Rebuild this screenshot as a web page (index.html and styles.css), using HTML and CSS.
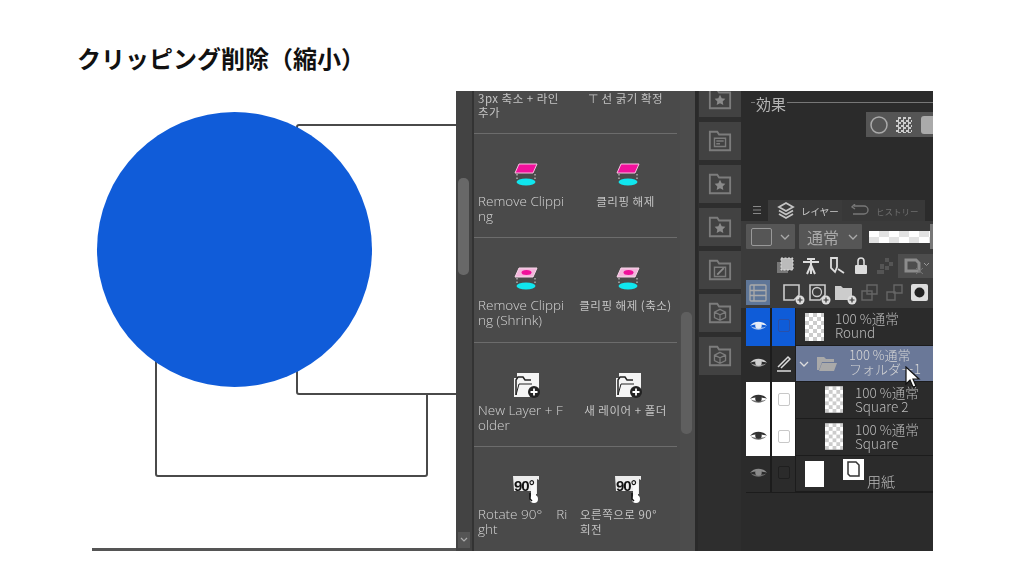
FILE: index.html
```html
<!DOCTYPE html>
<html lang="ja">
<head>
<meta charset="utf-8">
<title>クリッピング削除（縮小）</title>
<link rel="stylesheet" href="styles.css">
</head>
<body>
<svg class="defs" width="0" height="0" aria-hidden="true">
  <defs>
    <pattern id="chk" width="8" height="8" patternUnits="userSpaceOnUse">
      <rect width="8" height="8" fill="#fff"/><rect width="4" height="4" fill="#ccc"/><rect x="4" y="4" width="4" height="4" fill="#ccc"/>
    </pattern>
    <symbol id="clip" viewBox="0 0 30 30">
      <path d="M8 3H26L22 12H4Z" fill="#f2109c" stroke="#f7c4e2"/>
      <path d="M6 13v5M24 13v5" stroke="#ddd" stroke-dasharray="1.5 2"/>
      <ellipse cx="15" cy="21" rx="9.500" ry="3.500" fill="#10e6ee"/>
    </symbol>
    <symbol id="clips" viewBox="0 0 30 30">
      <path d="M8 3H26L22 12H4Z" fill="#f4b5dc" stroke="#f8d8ea"/>
      <ellipse cx="15.500" cy="7.500" rx="5" ry="2.500" fill="#f0109a"/>
      <path d="M6 13v5M24 13v5" stroke="#ddd" stroke-dasharray="1.5 2"/>
      <ellipse cx="15" cy="21" rx="9.500" ry="3.500" fill="#10e6ee"/>
    </symbol>
    <symbol id="newfolder" viewBox="0 0 30 30">
      <path d="M3 27V8h3V3h22v17l-4 7z" fill="#f4f4f4"/>
      <path d="M5 25V10l2-3h5l2 3h6" fill="none" stroke="#222" stroke-width="1.500"/>
      <path d="M5 25l3-11h13" fill="none" stroke="#222" stroke-width="1"/>
      <circle cx="23" cy="22" r="6" fill="#222"/>
      <path d="M23 18.500v7M19.500 22h7" stroke="#fff" stroke-width="1.800"/>
    </symbol>
    <symbol id="rotate" viewBox="0 0 30 30">
      <path d="M2 2H28V6L26 5V20H20V17H3Z" fill="#ececec"/>
      <path d="M20 10h5v14h-5z" fill="#f8f8f8"/>
      <circle cx="23" cy="25" r="4" fill="#fff"/>
      <path d="M19 19v6l2 2" fill="none" stroke="#111" stroke-width="1.500"/>
      <text x="3" y="17" class="rot">90°</text>
    </symbol>
    <symbol id="starfolder" viewBox="0 0 26 26">
      <path d="M2 3h8l2 3h12v17H2z" fill="none" stroke="#7c7c7c" stroke-width="2"/>
      <path d="M13 8.500l1.800 3.700 4 .6-2.900 2.800.7 4-3.600-1.900-3.600 1.900.7-4-2.900-2.800 4-.6z" fill="#8a8a8a"/>
    </symbol>
    <symbol id="formfolder" viewBox="0 0 26 26">
      <path d="M2 3h8l2 3h12v17H2z" fill="none" stroke="#7c7c7c" stroke-width="2"/>
      <path d="M7 10h12v9H7zM9 13h8M9 16h4" fill="none" stroke="#7c7c7c" stroke-width="1.500"/>
    </symbol>
    <symbol id="editfolder" viewBox="0 0 26 26">
      <path d="M2 3h8l2 3h12v17H2z" fill="none" stroke="#7c7c7c" stroke-width="2"/>
      <path d="M7 10h12v10H7z" fill="none" stroke="#7c7c7c" stroke-width="1.500"/>
      <path d="M10 18l7-7" stroke="#8a8a8a" stroke-width="2"/>
    </symbol>
    <symbol id="boxfolder" viewBox="0 0 26 26">
      <path d="M2 3h8l2 3h12v17H2z" fill="none" stroke="#7c7c7c" stroke-width="2"/>
      <path d="M13 9l6 3v6l-6 3-6-3v-6zM7 12l6 3 6-3M13 15v6" fill="none" stroke="#7c7c7c" stroke-width="1.400"/>
    </symbol>
    <symbol id="eye" viewBox="0 0 20 14">
      <path d="M1 7C5 1 15 1 19 7C15 5 5 5 1 7Z" fill="currentColor"/>
      <path d="M2 7.500C6 12 14 12 18 7.500C14 9.500 6 9.500 2 7.500Z" fill="currentColor" opacity=".7"/>
      <circle cx="10" cy="6.500" r="3.400" fill="currentColor"/>
    </symbol>
    <symbol id="addbadge" viewBox="0 0 10 10">
      <circle cx="5" cy="5" r="4.500" fill="#ddd"/>
      <path d="M5 2.500v5M2.500 5h5" stroke="#333" stroke-width="1.200"/>
    </symbol>
  </defs>
</svg>

<h1 class="title">クリッピング削除（縮小）</h1>

<main class="stage">
  <section class="drawing">
    <div class="shape shape-back"></div>
    <div class="shape shape-front"></div>
    <div class="shape shape-circle"></div>
  </section>

  <section class="app">
    <div class="side-scroll">
      <div class="thumb-left"></div>
      <svg class="chev" width="12" height="16" viewBox="0 0 12 16"><path d="M3 6l3 3 3-3" fill="none" stroke="#aaa" stroke-width="1.200"/></svg>
    </div>

    <div class="palette">
      <div class="p-row p-row-top">
        <div class="p-cell"><p class="label kr">3px 축소 + 라인<br>추가</p></div>
        <div class="p-cell"><p class="label kr center">⊤ 선 굵기 확정</p></div>
      </div>
      <div class="p-row">
        <div class="p-cell"><svg class="p-icon"><use href="#clip"/></svg><p class="label">Remove Clippi<br>ng</p></div>
        <div class="p-cell"><svg class="p-icon"><use href="#clip"/></svg><p class="label kr center">클리핑 해제</p></div>
      </div>
      <div class="p-row">
        <div class="p-cell"><svg class="p-icon"><use href="#clips"/></svg><p class="label">Remove Clippi<br>ng (Shrink)</p></div>
        <div class="p-cell"><svg class="p-icon"><use href="#clips"/></svg><p class="label kr center">클리핑 해제 (축소)</p></div>
      </div>
      <div class="p-row">
        <div class="p-cell"><svg class="p-icon"><use href="#newfolder"/></svg><p class="label">New Layer + F<br>older</p></div>
        <div class="p-cell"><svg class="p-icon"><use href="#newfolder"/></svg><p class="label kr center">새 레이어 + 폴더</p></div>
      </div>
      <div class="p-row p-row-last">
        <div class="p-cell"><svg class="p-icon"><use href="#rotate"/></svg><p class="label">Rotate 90°&nbsp;&nbsp;&nbsp;&nbsp;Ri<br>ght</p></div>
        <div class="p-cell"><svg class="p-icon"><use href="#rotate"/></svg><p class="label kr">오른쪽으로 90°<br>회전</p></div>
      </div>
    </div>

    <div class="palette-scroll"><div class="thumb-right"></div></div>

    <nav class="tabs-strip">
      <div class="t-btn t-btn-first"><svg class="t-icon"><use href="#starfolder"/></svg></div>
      <div class="t-btn"><svg class="t-icon"><use href="#formfolder"/></svg></div>
      <div class="t-btn"><svg class="t-icon"><use href="#starfolder"/></svg></div>
      <div class="t-btn"><svg class="t-icon"><use href="#starfolder"/></svg></div>
      <div class="t-btn"><svg class="t-icon"><use href="#editfolder"/></svg></div>
      <div class="t-btn"><svg class="t-icon"><use href="#boxfolder"/></svg></div>
      <div class="t-btn"><svg class="t-icon"><use href="#boxfolder"/></svg></div>
    </nav>

    <div class="panel">
      <div class="fx">
        <div class="legend"><i class="rule rule-short"></i><span>効果</span><i class="rule"></i></div>
        <div class="fx-tools">
          <svg width="20" height="20" viewBox="0 0 20 20"><circle cx="10" cy="10" r="8" fill="none" stroke="#aaa" stroke-width="1.500"/></svg>
          <i class="dots"></i>
          <i class="fx-square"></i>
        </div>
      </div>

      <div class="tabbar">
        <svg class="menu" width="10" height="10" viewBox="0 0 10 10"><path d="M1 1.500h8M1 5h8M1 8.500h8" stroke="#888" stroke-width="1"/></svg>
        <div class="tab tab-on">
          <svg width="18" height="20" viewBox="0 0 18 20"><path d="M9 2l7 4-7 4-7-4zM2 9.500l7 4 7-4M2 13l7 4 7-4" fill="none" stroke="#c4c4c4" stroke-width="1.800"/></svg>
          <span>レイヤー</span>
        </div>
        <div class="tab tab-off">
          <svg width="20" height="14" viewBox="0 0 20 14"><path d="M4 2h10a4 4 0 0 1 0 8H3M5 0L2 3l3 2" fill="none" stroke="#777" stroke-width="1.400"/></svg>
          <span>ヒストリー</span>
        </div>
      </div>

      <div class="controls">
        <div class="select select-color">
          <i class="swatch"></i>
          <svg width="10" height="6" viewBox="0 0 10 6"><path d="M1 1l4 4 4-4" fill="none" stroke="#aaa" stroke-width="1.300"/></svg>
        </div>
        <div class="select select-mode">
          <span>通常</span>
          <svg width="10" height="6" viewBox="0 0 10 6"><path d="M1 1l4 4 4-4" fill="none" stroke="#aaa" stroke-width="1.300"/></svg>
        </div>
        <div class="opacity"></div>
        <i class="handle"></i>
      </div>

      <div class="toolrow">
        <svg width="18" height="18" viewBox="0 0 18 18"><rect x="1" y="5" width="11" height="11" fill="#777"/><rect x="5" y="1" width="12" height="12" fill="#bbb" stroke="#ddd" stroke-dasharray="2 1.500"/></svg>
        <svg width="18" height="18" viewBox="0 0 18 18"><path d="M1 5h16M5 2h8M9 2v15M5 17l4-9 4 9" fill="none" stroke="#ddd" stroke-width="2"/></svg>
        <svg width="18" height="20" viewBox="0 0 18 20"><path d="M3 2h6v9l-2 5-4-4zM10 13l6 4" fill="none" stroke="#ddd" stroke-width="1.800"/></svg>
        <svg width="14" height="18" viewBox="0 0 14 18"><rect x="1" y="8" width="12" height="9" rx="1" fill="#ddd"/><path d="M4 8V4a3 3 0 0 1 6 0v4" fill="none" stroke="#ddd" stroke-width="1.600"/></svg>
        <svg width="18" height="18" viewBox="0 0 18 18"><path d="M9 1h4v4H9zM13 5h4v4h-4zM9 9h4v4H9zM1 13h7v4H1zM4 7h4v5H4z" fill="#555"/></svg>
        <div class="clip-btn">
          <svg width="26" height="18" viewBox="0 0 26 18"><path d="M3 3h10l3 3v8H3z" fill="none" stroke="#8c8c8c" stroke-width="3"/><path d="M13 11l7 6M20 11l-7 6" stroke="#777"/><path d="M21 6l2.500 2.500L26 6" fill="none" stroke="#999"/></svg>
        </div>
      </div>

      <div class="toolrow toolrow-layer">
        <div class="layer-toggle">
          <svg width="18" height="18" viewBox="0 0 18 18"><rect x="1" y="1" width="16" height="16" rx="1" fill="none" stroke="#aaa" stroke-width="1.300"/><path d="M1 6.500h16M1 11.500h16M5 1v16" stroke="#aaa" stroke-width="1.300"/></svg>
        </div>
        <div class="add-icons">
          <span class="add"><svg width="19" height="19" viewBox="0 0 19 19"><path d="M2 2h15v10l-5 5H2z" fill="none" stroke="#ccc" stroke-width="1.600"/></svg><svg class="badge"><use href="#addbadge"/></svg></span>
          <span class="add"><svg width="19" height="19" viewBox="0 0 19 19"><path d="M2 2h15v10l-5 5H2z" fill="none" stroke="#ccc" stroke-width="1.600"/><circle cx="9" cy="9" r="4.500" fill="none" stroke="#ccc" stroke-width="1.300"/></svg><svg class="badge"><use href="#addbadge"/></svg></span>
          <span class="add"><svg width="19" height="19" viewBox="0 0 19 19"><path d="M1 3h6l2 2h9v12H1z" fill="#ccc"/></svg><svg class="badge"><use href="#addbadge"/></svg></span>
          <svg width="19" height="19" viewBox="0 0 19 19"><path d="M7 2h10v9H7zM2 8h10v9H2z" fill="none" stroke="#666" stroke-width="1.400"/></svg>
          <svg width="19" height="19" viewBox="0 0 19 19"><path d="M9 2h8v8H9zM2 9h8v8H2z" fill="none" stroke="#666" stroke-width="1.400"/></svg>
          <svg width="19" height="19" viewBox="0 0 19 19"><rect x="1" y="1" width="17" height="17" rx="2" fill="#ddd"/><circle cx="9.500" cy="9.500" r="5" fill="#222"/></svg>
        </div>
      </div>

      <div class="layers">
        <div class="layer layer-round">
          <div class="l-cell l-blue"><svg class="l-eye"><use href="#eye"/></svg></div>
          <div class="l-cell l-blue"><i class="check check-blue"></i></div>
          <div class="l-body l-body-round">
            <svg class="thumb" viewBox="0 0 19 28"><rect width="19" height="28" fill="url(#chk)"/></svg>
            <p class="l-text"><span>100 %通常</span><span>Round</span></p>
          </div>
        </div>
        <div class="layer layer-folder">
          <div class="l-cell"><svg class="l-eye"><use href="#eye"/></svg></div>
          <div class="l-cell"><svg width="16" height="18" viewBox="0 0 16 18"><path d="M2 13L12 3l2 2L5 14M1 17h14" fill="none" stroke="#ddd" stroke-width="1.500"/></svg></div>
          <div class="l-body l-body-folder">
            <svg width="10" height="6" viewBox="0 0 10 6"><path d="M1 1l4 4 4-4" fill="none" stroke="#ddd" stroke-width="1.300"/></svg>
            <svg class="l-folder" width="22" height="17" viewBox="0 0 22 17"><path d="M1 2h7l2 2h8v3H6L3 15H1zM6 8h15l-3 8H3z" fill="#a9a9a9"/></svg>
            <p class="l-text"><span>100 %通常</span><span>フォルダー1</span></p>
          </div>
        </div>
        <div class="layer layer-child">
          <div class="l-cell l-white"><svg class="l-eye l-eye-dark"><use href="#eye"/></svg></div>
          <div class="l-cell l-white"><i class="check"></i></div>
          <div class="l-body l-body-child">
            <svg class="thumb" viewBox="0 0 19 28"><rect width="19" height="28" fill="url(#chk)"/></svg>
            <p class="l-text"><span>100 %通常</span><span>Square 2</span></p>
          </div>
        </div>
        <div class="layer layer-child">
          <div class="l-cell l-white"><svg class="l-eye l-eye-dark"><use href="#eye"/></svg></div>
          <div class="l-cell l-white"><i class="check"></i></div>
          <div class="l-body l-body-child">
            <svg class="thumb" viewBox="0 0 19 28"><rect width="19" height="28" fill="url(#chk)"/></svg>
            <p class="l-text"><span>100 %通常</span><span>Square</span></p>
          </div>
        </div>
        <div class="layer layer-paper">
          <div class="l-cell"><svg class="l-eye l-eye-dim"><use href="#eye"/></svg></div>
          <div class="l-cell"><i class="check check-dark"></i></div>
          <div class="l-body l-body-paper">
            <i class="paper"></i>
            <svg class="paper-icon" width="21" height="21" viewBox="0 0 21 21"><rect width="21" height="21" fill="#fff"/><path d="M5 3h8l3 3v11H7l-2-2z" fill="none" stroke="#333" stroke-width="1.500"/></svg>
            <span class="paper-name">用紙</span>
          </div>
        </div>
      </div>

      <svg class="cursor" width="16" height="23" viewBox="0 0 16 23"><path d="M1 1V18L5 14L8 21L11 20L8 13H14Z" fill="#fff" stroke="#111" stroke-width="1.200"/></svg>
    </div>
  </section>
</main>
</body>
</html>
```
FILE: styles.css
```css
* { box-sizing: border-box; }
html, body { margin: 0; padding: 0; }
body {
  width: 1024px;
  height: 576px;
  overflow: hidden;
  background: #fff;
  font-family: "Noto Sans CJK JP", "Noto Sans", sans-serif;
}
.defs { position: absolute; }
p { margin: 0; }
i { display: block; }
svg { display: block; flex: none; }

.title {
  margin: 0;
  height: 91px;
  padding: 41px 0 0 77px;
  font-size: 24px;
  line-height: 34px;
  font-weight: 700;
  color: #111;
  white-space: nowrap;
}

.stage { display: flex; margin-left: 92px; width: 841px; height: 460px; }

/* drawing: free canvas */
.drawing {
  position: relative;
  width: 364px;
  height: 460px;
  overflow: hidden;
  border-bottom: 3px solid #555;
}
.shape { position: absolute; }
.shape-back {
  left: 63px; top: 200px; width: 273px; height: 186px;
  border: 2px solid #4a4a4a; border-radius: 3px; background: #fff;
}
.shape-front {
  left: 204px; top: 33px; width: 220px; height: 271px;
  border: 2px solid #4a4a4a; border-radius: 3px; background: #fff;
}
.shape-circle {
  left: 5px; top: 21px; width: 275px; height: 275px;
  border-radius: 50%; background: #105cd9;
}

/* app */
.app {
  position: relative;
  display: flex;
  width: 477px;
  height: 460px;
  overflow: hidden;
  background: #2b2b2b;
  filter: blur(.5px);
}

.side-scroll {
  display: flex;
  flex-direction: column;
  width: 18px;
  padding: 87px 4px 3px 2px;
  background: #434343;
  border-right: 2px solid #333;
}
.thumb-left { width: 11px; height: 97px; border-radius: 5px; background: #686868; }
.chev { margin-top: auto; background: #555; }

.palette { width: 206px; background: #4a4a4a; padding-right: 3px; display: flex; flex-direction: column; }
.p-row {
  flex: none;
  display: grid;
  grid-template-columns: 102px 101px;
  height: 104.3px;
  border-bottom: 1px solid #6c6c6c;
}
.p-row-top { height: 43px; }
.p-row-last { border-bottom: 0; }
.p-cell { display: flex; flex-direction: column; align-items: stretch; padding: 27px 0 0 4px; }
.p-row-top .p-cell { padding-top: 0; }
.p-row-top .label { line-height: 14px; }
.p-icon { width: 30px; height: 30px; margin: 0 0 3px 33px; }
.label {
  font-family: "Open Sans", "Noto Sans CJK KR", sans-serif;
  font-size: 13.5px;
  font-weight: 300;
  line-height: 15px;
  color: #d4d4d4;
  white-space: nowrap;
}
.label.kr {
  font-family: "Noto Sans CJK KR", sans-serif;
  font-size: 11.5px;
  letter-spacing: .5px;
  font-weight: 400;
  color: #c4c4c4;
}
.label.center { text-align: center; margin-left: -6px; }
.rot { font: 700 15px "Liberation Sans", sans-serif; letter-spacing: -1px; fill: #111; }

.palette-scroll { width: 15px; padding: 221px 2px 0 0; background: #4c4c4c; }
.thumb-right { width: 11px; height: 122px; margin-left: 1px; border-radius: 5px; background: #5f5f5f; }

.tabs-strip {
  width: 47px;
  display: flex;
  flex-direction: column;
  gap: 5px;
  padding-left: 1px;
  background: #2e2e2e;
  border-left: 3px solid #2a2a2a;
}
.t-btn {
  flex: none;
  width: 42px;
  height: 38px;
  display: flex;
  align-items: center;
  justify-content: center;
  background: #424242;
}
.t-btn-first { height: 26px; align-items: flex-end; padding-bottom: 6px; overflow: hidden; }
.t-icon { width: 24px; height: 24px; }

.panel {
  position: relative;
  width: 192px;
  display: flex;
  flex-direction: column;
  background: #2b2b2b;
  color: #bbb;
}

.fx { height: 109px; padding: 3px 0 0 10px; }
.legend { display: flex; align-items: center; gap: 1px; height: 18px; font-size: 15px; color: #b4b4b4; }
.legend span { font-weight: 400; }
.rule { flex: 1; height: 1px; background: #777; margin-top: -2px; }
.rule-short { flex: none; width: 4px; }
.fx-tools {
  display: flex;
  align-items: center;
  gap: 7px;
  width: 67px;
  height: 25px;
  margin: 0 0 0 115px;
  padding-left: 3px;
  background: #555;
  overflow: hidden;
}
.dots {
  flex: none;
  width: 16px; height: 16px;
  background: repeating-conic-gradient(#ccc 0 25%, #555 0 50%) 0 0 / 5px 5px;
}
.fx-square { width: 20px; height: 18px; margin-left: 2px; flex: none; border-radius: 3px; background: #aaa; }

.tabbar { display: flex; align-items: flex-end; height: 21px; padding-left: 11px; background: #2b2b2b; }
.menu { margin-bottom: 6px; }
.tab { display: flex; align-items: center; gap: 6px; height: 21px; font-size: 9.500px; white-space: nowrap; overflow: hidden; }
.tab-on { width: 74px; margin-left: 6px; padding-left: 9px; background: #3b3b3b; color: #ccc; }
.tab-off { width: 83px; padding-left: 8px; background: #383838; color: #6e6e6e; font-size: 8.500px; }

.controls {
  display: flex;
  align-items: center;
  gap: 4px;
  height: 31px;
  padding-left: 5px;
  background: #3b3b3b;
}
.select {
  display: flex;
  align-items: center;
  height: 25px;
  background: #565656;
  border-radius: 1px;
}
.select-color { width: 49px; gap: 8px; padding-left: 5px; }
.swatch { width: 21px; height: 18px; border: 1.500px solid #999; border-radius: 2px; }
.select-mode { width: 63px; gap: 9px; padding-left: 8px; font-size: 16px; color: #a8a8a8; }
.opacity {
  width: 61px;
  height: 12px;
  margin-left: 3px;
  background: repeating-conic-gradient(#e2e2e2 0 25%, #fff 0 50%) 0 0 / 20px 12px;
}
.handle { width: 3px; height: 25px; margin-left: -4px; background: #777; }

.toolrow {
  display: flex;
  align-items: center;
  gap: 8px;
  height: 27px;
  padding-left: 35px;
  background: #3b3b3b;
}
.clip-btn {
  display: flex;
  align-items: center;
  width: 38px;
  height: 24px;
  margin-left: -4px;
  padding-left: 5px;
  background: #4d4d4d;
}
.toolrow-layer { height: 29px; gap: 8px; padding: 0 0 2px 5px; }
.layer-toggle {
  display: flex;
  align-items: center;
  justify-content: center;
  width: 24px;
  height: 25px;
  background: #5f7697;
}
.add-icons { display: flex; align-items: center; gap: 6px; margin-left: 4px; }
.add { position: relative; display: block; width: 20px; height: 19px; }
.badge { position: absolute; right: -3px; bottom: -3px; width: 10px; height: 10px; }

.layers { display: flex; flex-direction: column; padding-left: 5px; flex: 1; }
.layer { display: flex; flex: none; background: #1c1c1c; }
.layer-round { height: 38px; }
.layer-folder { height: 36px; }
.layer-child { height: 37px; }
.layer-paper { height: 37px; border-bottom: 1px solid #1c1c1c; }
.l-cell {
  flex: none;
  display: flex;
  align-items: center;
  justify-content: center;
  width: 24px;
  margin-right: 2px;
  padding-bottom: 3px;
  background: #2b2b2b;
}
.l-cell + .l-cell { width: 23px; margin-right: 1px; }
.l-cell.l-blue { background: #0f5cd8; }
.l-cell.l-white { background: #fff; }
.l-eye { width: 19px; height: 14px; color: #cfcfcf; }
.l-blue .l-eye { color: #e6ecf7; }
.l-eye-dark { color: #333; }
.l-eye-dim { color: #8a8a8a; }
.check { width: 12px; height: 13px; border: 1.500px solid #c8c8c8; border-radius: 2px; }
.check-blue { border-color: #2a50a8; }
.check-dark { border-color: #1f1f1f; }

.l-body { flex: 1; display: flex; align-items: center; min-width: 0; overflow: hidden; background: #2b2b2b; border-bottom: 1px solid #1c1c1c; }
.l-body-round { padding-left: 9px; gap: 11px; }
.l-body-folder { padding-left: 3px; background: #6a7898; color: #d6d6d6; }
.l-folder { margin: 0 11px 0 7px; }
.l-body-child { padding-left: 29px; gap: 12px; }
.l-body-paper { padding: 0 0 0 9px; }
.thumb { width: 19px; height: 28px; }
.layer-child .thumb { width: 18px; height: 27px; margin-bottom: 2px; }
.l-text { display: flex; flex-direction: column; padding-bottom: 3px; font-size: 13.500px; line-height: 14px; font-weight: 300; white-space: nowrap; }
.layer-folder .l-text { font-size: 13px; line-height: 14px; }
.paper { width: 19px; height: 26px; background: #fff; }
.paper-icon { margin: -8px 0 0 19px; }
.paper-name { margin: 14px 0 0 3px; font-size: 14px; line-height: 16px; font-weight: 300; }

.cursor { position: absolute; left: 164px; top: 275px; }
```
